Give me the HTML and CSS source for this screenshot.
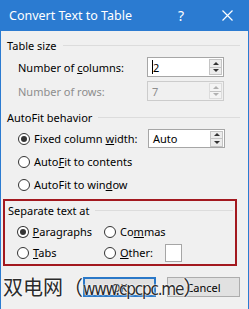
FILE: index.html
```html
<!DOCTYPE html>
<html lang="en">
<head>
    <meta charset="UTF-8">
    <title>Convert Text to Table</title>
    <link rel="stylesheet" href="styles.css">
</head>
<body>
    <div class="dialog">
        <div class="titlebar">
            <span class="title">Convert Text to Table</span>
            <span class="help">?</span>
            <svg class="close" width="11" height="11" viewBox="0 0 11 11">
                <path d="M0.5 0.5 L10.5 10.5 M10.5 0.5 L0.5 10.5" stroke="#fff" stroke-width="1.2" fill="none"/>
            </svg>
        </div>

        <div class="body">
            <div class="group-head"><span>Table size</span><i class="rule"></i></div>
            <div class="field">
                <label>Number of <u>c</u>olumns:</label>
                <div class="spin">
                    <span class="spin-val"><i class="caret"></i>2</span>
                    <span class="spin-btns"><b class="up"></b><b class="down"></b></span>
                </div>
            </div>
            <div class="field disabled">
                <label>Number of rows:</label>
                <div class="spin">
                    <span class="spin-val">7</span>
                    <span class="spin-btns"><b class="up"></b><b class="down"></b></span>
                </div>
            </div>

            <div class="group-head autofit"><span>AutoFit behavior</span><i class="rule"></i></div>
            <div class="option-row">
                <span class="radio checked"></span>
                <label class="opt-label">Fixed column <u>w</u>idth:</label>
                <div class="spin auto">
                    <span class="spin-val">Auto</span>
                    <span class="spin-btns"><b class="up"></b><b class="down"></b></span>
                </div>
            </div>
            <div class="option-row">
                <span class="radio"></span>
                <label>Auto<u>F</u>it to contents</label>
            </div>
            <div class="option-row">
                <span class="radio"></span>
                <label>AutoFit to win<u>d</u>ow</label>
            </div>

            <div class="separate">
                <div class="group-head"><span>Separate text at</span><i class="rule"></i></div>
                <div class="sep-grid">
                    <div class="option-row"><span class="radio checked"></span><label><u>P</u>aragraphs</label></div>
                    <div class="option-row"><span class="radio"></span><label>Co<u>m</u>mas</label></div>
                    <div class="option-row"><span class="radio"></span><label><u>T</u>abs</label></div>
                    <div class="option-row"><span class="radio"></span><label><u>O</u>ther:</label><span class="other-box"></span></div>
                </div>
            </div>

            <div class="buttons">
                <button class="btn default">OK</button>
                <button class="btn">Cancel</button>
            </div>
        </div>

        <div class="watermark">双电网（<span class="wm-latin">www.cpcpc.me</span>）</div>
    </div>
</body>
</html>
```

FILE: styles.css
```css
body {
    margin: 0;
    font-family: "Noto Sans", "Open Sans", sans-serif;
    font-size: 11px;
    color: #000;
    background: #f0f0f0;
}
.dialog {
    position: relative;
    width: 249px;
    height: 309px;
    box-sizing: border-box;
    border-left: 1px solid #2b7bd1;
    border-right: 1px solid #2b7bd1;
    background: #f0f0f0;
    overflow: hidden;
}
.titlebar {
    height: 31px;
    background: #2b7bd1;
    color: #fff;
    display: flex;
    align-items: center;
    padding-left: 8px;
}
.title {
    flex: 1;
    font-size: 12.5px;
}
.help {
    font-size: 14px;
    width: 44px;
}
.close {
    margin-right: 15px;
}
.body {
    padding: 4px 0 0 0;
}
.group-head {
    display: flex;
    align-items: center;
    height: 20px;
    padding-left: 6px;
    margin-right: 8px;
}
.group-head .rule {
    flex: 1;
    height: 1px;
    background: #dcdcdc;
    margin-left: 6px;
}
.field {
    display: flex;
    align-items: center;
    height: 20px;
    padding-left: 17px;
    margin-top: 2px;
}
.field + .field {
    margin-top: 4px;
}
.field label {
    width: 129px;
}
.disabled {
    color: #8d8d8d;
}
.spin {
    display: flex;
    width: 77px;
    height: 20px;
    box-sizing: border-box;
    border: 1px solid #a6a6a6;
    background: #fff;
    align-items: center;
}
.disabled .spin {
    background: #f0f0f0;
    border-color: #cccccc;
}
.spin-val {
    flex: 1;
    padding-left: 4px;
    display: flex;
    align-items: center;
}
.caret {
    width: 1px;
    height: 14px;
    background: #000;
}
.spin-btns {
    width: 13px;
    height: 16px;
    margin-right: 1px;
    border: 1px solid #c4c4c4;
    background: #ececec;
    display: flex;
    flex-direction: column;
    box-sizing: border-box;
}
.spin-btns b {
    flex: 1;
    display: flex;
    align-items: center;
    justify-content: center;
}
.spin-btns .up {
    border-bottom: 1px solid #c4c4c4;
}
.spin-btns .up::before {
    content: "";
    border-left: 3px solid transparent;
    border-right: 3px solid transparent;
    border-bottom: 3px solid #333;
}
.spin-btns .down::before {
    content: "";
    border-left: 3px solid transparent;
    border-right: 3px solid transparent;
    border-top: 3px solid #333;
}
.disabled .spin-btns {
    border-color: #dcdcdc;
    background: #f4f4f4;
}
.disabled .spin-btns .up::before {
    border-bottom-color: #b0b0b0;
}
.disabled .spin-btns .down::before {
    border-top-color: #b0b0b0;
}
.autofit {
    margin-top: 6px;
}
.option-row {
    display: flex;
    align-items: center;
    height: 23px;
    padding-left: 17px;
}
.radio {
    width: 12px;
    height: 12px;
    box-sizing: border-box;
    border: 1px solid #333;
    border-radius: 50%;
    background: #fff;
    margin-right: 4px;
    display: flex;
    align-items: center;
    justify-content: center;
}
.radio.checked::before {
    content: "";
    width: 6px;
    height: 6px;
    border-radius: 50%;
    background: #333;
}
.opt-label {
    width: 114px;
}
.spin.auto {
    height: 19px;
}
.separate {
    margin: 3px 11px 0 2px;
    border: 2px solid #a3191f;
    height: 67px;
    box-sizing: border-box;
}
.separate .group-head {
    height: 18px;
    padding-left: 3px;
    margin-right: 2px;
}
.sep-grid {
    display: grid;
    grid-template-columns: 87px 1fr;
    margin-top: 2px;
}
.sep-grid .option-row {
    height: 21px;
    padding-left: 12px;
}
.other-box {
    width: 17px;
    height: 18px;
    box-sizing: border-box;
    border: 1px solid #a6a6a6;
    background: #fff;
    margin-left: 12px;
}
.buttons {
    display: flex;
    justify-content: flex-end;
    gap: 11px;
    padding-right: 8px;
    margin-top: 11px;
}
.btn {
    width: 73px;
    height: 20px;
    box-sizing: border-box;
    border: 1px solid #adadad;
    background: #e1e1e1;
    font-family: "Noto Sans", sans-serif;
    font-size: 11px;
    padding: 0;
}
.btn.default {
    border: 2px solid #2a78c8;
}
.watermark {
    position: absolute;
    left: 2px;
    top: 272px;
    font-family: "Noto Sans CJK SC", "Noto Sans", sans-serif;
    font-size: 20px;
    color: #2b2b2b;
    text-shadow: 0 0 2px #fff, 0 0 2px #fff;
    white-space: nowrap;
}
.wm-latin {
    font-family: "DejaVu Sans Condensed", "Noto Sans", sans-serif;
    font-size: 17px;
    letter-spacing: -1.2px;
}
```
